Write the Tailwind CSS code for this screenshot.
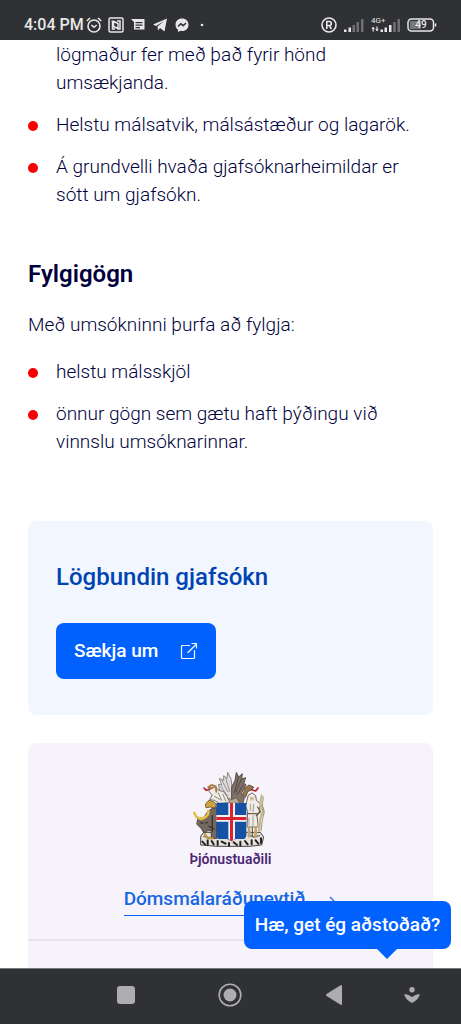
<!DOCTYPE html>
<html lang="is">
<head>
  <meta charset="UTF-8">
  <meta name="viewport" content="width=device-width,initial-scale=1.0">
  <title>Gjafsókn</title>
  <script src="https://cdn.jsdelivr.net/npm/@tailwindcss/browser@4"></script>
</head>
<body class="h-screen flex flex-col overflow-hidden bg-white font-['Roboto','Noto_Sans',sans-serif]">

  <!-- Status bar -->
  <header class="h-10 shrink-0 bg-[#303134] text-[#e8e8e9] flex items-center justify-between pt-2.5 pl-6 pr-6">
    <div class="flex items-center gap-1.5">
      <div class="flex items-center gap-0.5">
        <span class="text-[16px] leading-5 font-medium">4:04 PM</span>
        <svg class="w-4 h-4" viewBox="0 0 16 16" fill="none" stroke="currentColor" stroke-width="1.6">
          <circle cx="8" cy="9" r="6"/><path d="M.8 4 4 1M15.200 4 12 1M5.300 8 8 10.300 10.700 8"/>
        </svg>
      </div>
      <svg class="w-4 h-4" viewBox="0 0 16 16" fill="none" stroke="currentColor" stroke-width="1.500">
        <rect x="1" y="1" width="14" height="14" rx="1.500"/><path d="M3.500 4.200h2V9.500L10 11.500M7 12H4.500V4M9 4h3v8h-2V6.500L6 4.500"/>
      </svg>
      <svg class="w-4 h-4" viewBox="0 0 16 16" fill="currentColor">
        <path fill-rule="evenodd" d="M1 2h13.500v10.500H4V5zM5.500 5v1.200h7V5zM5.500 7.600v1.200h7V7.600zM5.500 10v1.200h4.500V10z"/>
      </svg>
      <svg class="w-4 h-4" viewBox="0 0 16 16" fill="currentColor">
        <path d="M15 1.500 12.500 14.500 8 11 6 13.500 5.500 9.500 12 4 4 9 1 7.600z"/>
      </svg>
      <svg class="w-4 h-4" viewBox="0 0 16 16">
        <path fill="currentColor" d="M8 1.500c4 0 6.500 2.700 6.500 6.200S12 14 8 14l-1.500-.2L4 15v-2.300C2.300 11.500 1.500 9.800 1.500 7.700 1.500 4.200 4 1.500 8 1.500z"/>
        <path fill="none" stroke="#303134" stroke-width="1.500" d="M4 9.500 6.800 6.700 9.200 8.700 12 6"/>
      </svg>
      <svg class="w-4 h-4" viewBox="0 0 16 16" fill="currentColor"><circle cx="6" cy="8" r="1.300"/></svg>
    </div>
    <div class="flex items-center gap-1.5">
      <svg class="w-4 h-4" viewBox="0 0 16 16" fill="none" stroke="currentColor" stroke-width="1.600">
        <circle cx="8" cy="8" r="7"/><path d="M5.800 12V4.500h2.500a2 2 0 0 1 0 4H5.800M8.300 8.500l2.200 3.500"/>
      </svg>
      <svg class="w-[22px] h-4" viewBox="0 0 22 16" fill="currentColor">
        <path d="M1 12.500h2.500V15H1zM5.500 10.500H8V15H5.500z"/><path opacity=".35" d="M9.500 8H12v7H9.500zM13.500 5H16v10h-2.500zM18 2h2.500v13H18z"/>
      </svg>
      <div class="relative w-[30px] h-4">
        <span class="absolute left-0 top-0 text-[8px] leading-[8px]">4G+</span>
        <svg class="w-[30px] h-4" viewBox="0 0 30 16" fill="currentColor">
          <path d="M2 9.500 4 12H2.800v2.500H1.600V12H.5zM6 14.500 4.300 12h1.100V9.500h1.200V12h1.100zM9.500 12.500H12V15H9.500zM13.500 10.500H16V15h-2.500zM18 8h2.500v7H18z"/>
          <path opacity=".35" d="M22.200 5h2.500v10h-2.500zM26.500 2H29v13h-2.500z"/>
        </svg>
      </div>
      <div class="relative w-[30px] h-4 flex items-center justify-center">
        <svg class="absolute inset-0 w-[30px] h-4" viewBox="0 0 30 16" fill="none" stroke="currentColor" stroke-width="1.500">
          <rect x="3" y="4" width="11" height="8" fill="#77787b" stroke="none"/><rect x="1" y="2" width="25.500" height="12" rx="3.500"/><path d="M28.500 6.500v3"/>
        </svg>
        <span class="relative pr-0.5 text-[10px] leading-4 font-medium">49</span>
      </div>
    </div>
  </header>

  <!-- Article -->
  <main class="relative flex-1 min-h-0 overflow-hidden px-7 pt-px text-[19px] leading-7 font-light text-[#00003c]">
    <ul class="space-y-3.5">
      <li class="pl-7 max-w-[360px]">lögmaður fer með það fyrir hönd umsækjanda.</li>
      <li class="flex"><span class="w-2.5 h-2.5 mt-2.5 mr-[18px] shrink-0 rounded-full bg-[#f80000]"></span>Helstu málsatvik, málsástæður og lagarök.</li>
      <li class="flex"><span class="w-2.5 h-2.5 mt-2.5 mr-[18px] shrink-0 rounded-full bg-[#f80000]"></span>Á grundvelli hvaða gjafsóknarheimildar er sótt um gjafsókn.</li>
    </ul>

    <h2 class="mt-12 text-[24px] leading-[34px] font-semibold">Fylgigögn</h2>
    <p class="mt-5">Með umsókninni þurfa að fylgja:</p>
    <ul class="mt-[19px] space-y-3.5">
      <li class="flex"><span class="w-2.5 h-2.5 mt-2.5 mr-[18px] shrink-0 rounded-full bg-[#f80000]"></span>helstu málsskjöl</li>
      <li class="flex"><span class="w-2.5 h-2.5 mt-2.5 mr-[18px] shrink-0 rounded-full bg-[#f80000]"></span>önnur gögn sem gætu haft þýðingu við vinnslu umsóknarinnar.</li>
    </ul>

    <section class="mt-[65px] rounded-lg bg-[#f2f7ff] px-7 py-9">
      <h3 class="text-[24px] leading-10 font-medium text-[#0044b3]">Lögbundin gjafsókn</h3>
      <button type="button" class="mt-[26px] h-14 w-40 rounded-lg bg-[#0061ff] px-[18px] flex items-center justify-between text-[19px] font-medium text-white">
        Sækja um
        <svg class="w-[18px] h-[18px]" viewBox="0 0 18 18" fill="none" stroke="currentColor" stroke-width="1.200" stroke-linejoin="round" stroke-linecap="round">
          <path d="M9.500 3.500H2.500a1 1 0 0 0-1 1v11a1 1 0 0 0 1 1h11a1 1 0 0 0 1-1V8.500M8 10.500 16.500 2M12 1.500h4.500V6"/>
        </svg>
      </button>
    </section>

    <section class="mt-7 rounded-t-lg bg-[#f6f4fa] pt-7 pb-16 flex flex-col items-center">
      <!-- Coat of arms, 3 units per pixel -->
      <svg class="w-[75px] h-[78px] mr-1" viewBox="62 62 225 234" stroke-linejoin="round" stroke-linecap="round">
        <!-- plinth -->
        <path d="M92 256 100 246 270 246 280 260 274 284 236 288 140 288 92 284z" fill="#e4e1df" stroke="#4a4542" stroke-width="3"/>
        <path d="M96 274l8 8M112 270v14M124 272l6 10M142 272v12M154 274l12 6M176 278v8M190 276l10 8M210 274v12M224 272l8 10M244 270v12M256 270l8 10M272 264v14" fill="none" stroke="#25211f" stroke-width="6"/>
        <path d="M100 258l16 4 14-4M238 256l14 4 16-4" fill="none" stroke="#77716c" stroke-width="4"/>
        <!-- eagle wings -->
        <path d="M182 158 160 150 150 128 144 102 154 104 147 84 160 90 160 76 170 84 172 66 182 86 186 120z" fill="#dedcdc" stroke="#8b8784" stroke-width="3"/>
        <path d="M154 88l18 36M166 82l12 42M152 108l18 28" fill="none" stroke="#96918e" stroke-width="3"/>
        <path d="M184 158 184 110 194 90 198 66 205 80 216 70 214 86 226 82 220 100 227 102 214 128 222 142 218 158z" fill="#7e7167" stroke="#5c5149" stroke-width="3"/>
        <path d="M214 86l-18 40M203 84l-10 42M218 104l-18 30" fill="none" stroke="#52473f" stroke-width="3"/>
        <path d="M160 158 170 142 184 148 198 142 208 158z" fill="#b8a88e" stroke="#5b5046" stroke-width="2"/>
        <!-- dragon -->
        <path d="M146 158 132 150 118 148 126 134 116 124 120 112 136 110 146 120 160 124 170 138 178 156z" fill="#eeebe6" stroke="#766f68" stroke-width="3"/>
        <path d="M132 138l18 10M144 128l10 22M158 132l8 20" fill="none" stroke="#938b82" stroke-width="3"/>
        <path d="M138 124 136 108 124 104 114 110 126 114" fill="none" stroke="#a97f45" stroke-width="6"/>
        <path d="M118 116 108 120 101 113" fill="none" stroke="#b5232b" stroke-width="5"/>
        <!-- griffin head -->
        <path d="M218 136 224 112 236 104 250 110 244 118 232 124 226 140z" fill="#96784f" stroke="#6b563d" stroke-width="3"/>
        <path d="M244 118 256 122 263 113" fill="none" stroke="#b5232b" stroke-width="5"/>
        <path d="M106 160 116 150 130 154 138 162 134 174 120 170 108 172z" fill="#cda241" stroke="#80642c" stroke-width="3"/>
        <!-- bull -->
        <path d="M84 204 100 202 112 184 126 174 140 172 140 264 124 264 122 240 108 242 102 250 94 236 80 222z" fill="#74685f" stroke="#4a413b" stroke-width="3"/>
        <path d="M72 188 78 200 92 206 106 200 114 190 114 182" fill="none" stroke="#e8bd45" stroke-width="8"/>
        <path d="M92 216l5 3M106 218l5-2M126 196v46M116 228l16 8" fill="none" stroke="#39312d" stroke-width="4"/>
        <path d="M104 252 112 264 126 264" fill="none" stroke="#c29a48" stroke-width="7"/>
        <!-- giant -->
        <path d="M230 150 234 134 246 128 256 136 258 150 270 160 268 182 260 196 264 230 230 230 232 184 226 168z" fill="#f0ede8" stroke="#6b645d" stroke-width="3"/>
        <path d="M238 140h14l-2 10-10 1z" fill="#d6bb9c"/>
        <path d="M240 162v18M250 162l-2 22M236 204v20M248 196v30" fill="none" stroke="#a49b90" stroke-width="3"/>
        <path d="M232 190h28M262 170 270 184 258 196" fill="none" stroke="#6d5b45" stroke-width="4"/>
        <path d="M236 232v26M256 232v26" fill="none" stroke="#c4a766" stroke-width="8"/>
        <path d="M246 232v26" fill="none" stroke="#4f463e" stroke-width="3"/>
        <path d="M274 136 270 160 278 182 270 204 266 240" fill="none" stroke="#c8b785" stroke-width="7"/>
        <path d="M279 140 276 164 282 184 276 210 272 242" fill="none" stroke="#736650" stroke-width="2"/>
        <!-- shield -->
        <path d="M138 158h90v100l-6 8h-26l-13 7-13-7h-26l-6-8z" fill="#1651a4"/>
        <path d="M174 158h20v108l-11 7-9-7zM138 194h90v20h-90z" fill="#f4f1f5"/>
        <path d="M179 158h9v112l-5 3-4-3zM138 200h90v9h-90z" fill="#d9232e"/>
      </svg>
      <p class="text-[14px] leading-5 font-semibold text-[#4d2773]">Þjónustuaðili</p>
      <a href="#" class="mt-4 flex items-center gap-4 border-b border-[#0061ff] pb-0.5 text-[19px] font-medium text-[#1766e2]">
        Dómsmálaráðuneytið
        <svg class="w-4 h-4 mt-1.5" viewBox="0 0 16 16" fill="none" stroke="currentColor" stroke-width="1.200"><path d="M1 8h13M9 3l5 5-5 5"/></svg>
      </a>
      <hr class="mt-[23px] w-full border-t-2 border-[#e7e4ee]">
    </section>

    <!-- Chat prompt -->
    <button type="button" class="absolute right-2.5 bottom-[19px] h-12 w-[207px] rounded-lg bg-[#0061ff] text-[19px] font-medium text-white whitespace-nowrap">
      Hæ, get ég aðstoðað?
      <svg class="absolute right-[54px] top-full w-5 h-2.5" viewBox="0 0 20 10" fill="#0061ff"><path d="M0 0h20L10 10z"/></svg>
    </button>
  </main>

  <!-- Navigation bar -->
  <nav class="h-14 shrink-0 border-t border-[#77787a] bg-[#303134] text-[#adadb0] pl-[74px] pr-[23px] pb-1 grid grid-cols-[2fr_2fr_2fr_1fr] items-center justify-items-center">
    <button type="button" aria-label="Recent apps"><svg class="w-[18px] h-[18px]" viewBox="0 0 18 18" fill="currentColor"><rect width="18" height="18" rx="3"/></svg></button>
    <button type="button" aria-label="Home"><svg class="w-6 h-6" viewBox="0 0 24 24"><circle cx="12" cy="12" r="10.800" fill="none" stroke="currentColor" stroke-width="1.600"/><circle cx="12" cy="12" r="6.500" fill="currentColor"/></svg></button>
    <button type="button" aria-label="Back"><svg class="w-4 h-5" viewBox="0 0 16 20" fill="currentColor"><path d="M15 0q1 0 1 1v18q0 1-1 1L.5 11q-1-1 0-2z"/></svg></button>
    <button type="button" aria-label="Hide bar"><svg class="w-4 h-4" viewBox="0 0 16 16" fill="currentColor"><circle cx="8" cy="2.700" r="2.700"/><path d="M.5 7Q4 7 8 10 12 7 15.500 7q.5 3-3 6L9 15.500q-1 .7-2 0L3.500 13Q0 10 .5 7z"/></svg></button>
  </nav>
</body>
</html>
